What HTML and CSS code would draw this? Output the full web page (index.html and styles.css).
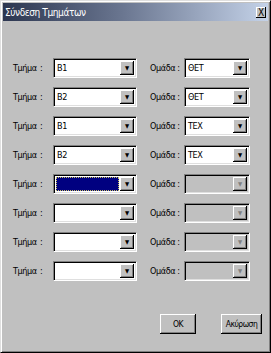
FILE: index.html
```html
<!DOCTYPE html>
<html lang="el">
<head>
    <meta charset="UTF-8">
    <title>Σύνδεση Τμημάτων</title>
    <link rel="stylesheet" href="styles.css">
</head>
<body>
    <div class="window">
        <div class="titlebar">
            <span class="title">Σύνδεση Τμημάτων</span>
            <span class="close">X</span>
        </div>

        <div class="rows">
            <div class="row">
                <span class="label">Τμήμα</span><span class="colon">:</span>
                <div class="combo wide"><span class="value">B1</span><span class="arrow">&#9660;</span></div>
                <span class="label group">Ομάδα :</span>
                <div class="combo narrow"><span class="value">ΘΕΤ</span><span class="arrow">&#9660;</span></div>
            </div>
            <div class="row">
                <span class="label">Τμήμα</span><span class="colon">:</span>
                <div class="combo wide"><span class="value">B2</span><span class="arrow">&#9660;</span></div>
                <span class="label group">Ομάδα :</span>
                <div class="combo narrow"><span class="value">ΘΕΤ</span><span class="arrow">&#9660;</span></div>
            </div>
            <div class="row">
                <span class="label">Τμήμα</span><span class="colon">:</span>
                <div class="combo wide"><span class="value">B1</span><span class="arrow">&#9660;</span></div>
                <span class="label group">Ομάδα :</span>
                <div class="combo narrow"><span class="value">ΤΕΧ</span><span class="arrow">&#9660;</span></div>
            </div>
            <div class="row">
                <span class="label">Τμήμα</span><span class="colon">:</span>
                <div class="combo wide"><span class="value">B2</span><span class="arrow">&#9660;</span></div>
                <span class="label group">Ομάδα :</span>
                <div class="combo narrow"><span class="value">ΤΕΧ</span><span class="arrow">&#9660;</span></div>
            </div>
            <div class="row">
                <span class="label">Τμήμα</span><span class="colon">:</span>
                <div class="combo wide focused"><span class="value"><span class="selection"></span></span><span class="arrow">&#9660;</span></div>
                <span class="label group">Ομάδα :</span>
                <div class="combo narrow disabled"><span class="value"></span><span class="arrow">&#9660;</span></div>
            </div>
            <div class="row">
                <span class="label">Τμήμα</span><span class="colon">:</span>
                <div class="combo wide"><span class="value"></span><span class="arrow">&#9660;</span></div>
                <span class="label group">Ομάδα :</span>
                <div class="combo narrow disabled"><span class="value"></span><span class="arrow">&#9660;</span></div>
            </div>
            <div class="row">
                <span class="label">Τμήμα</span><span class="colon">:</span>
                <div class="combo wide"><span class="value"></span><span class="arrow">&#9660;</span></div>
                <span class="label group">Ομάδα :</span>
                <div class="combo narrow disabled"><span class="value"></span><span class="arrow">&#9660;</span></div>
            </div>
            <div class="row">
                <span class="label">Τμήμα</span><span class="colon">:</span>
                <div class="combo wide"><span class="value"></span><span class="arrow">&#9660;</span></div>
                <span class="label group">Ομάδα :</span>
                <div class="combo narrow disabled"><span class="value"></span><span class="arrow">&#9660;</span></div>
            </div>
        </div>

        <div class="buttons">
            <button class="btn ok">OK</button>
            <button class="btn">Ακύρωση</button>
        </div>
    </div>
</body>
</html>
```

FILE: styles.css
```css
body {
    margin: 0;
    background: #c0c0c0;
    font-family: "DejaVu Sans Condensed", "DejaVu Sans", sans-serif;
    font-stretch: condensed;
    font-size: 9px;
    letter-spacing: -0.4px;
}
.window {
    box-sizing: border-box;
    width: 271px;
    height: 353px;
    background: #c0c0c0;
    border-top: 1px solid #dfdfdf;
    border-left: 1px solid #dfdfdf;
    border-right: 1px solid #000;
    border-bottom: 1px solid #000;
    box-shadow: inset 1px 1px 0 #fff, inset -1px -1px 0 #808080;
    padding: 2px;
    display: flex;
    flex-direction: column;
}
.titlebar {
    height: 18px;
    background: linear-gradient(to right, #2c3650, #6a7690 45%, #c4d2e8);
    display: flex;
    align-items: center;
    justify-content: space-between;
    padding: 0 2px 0 2px;
}
.title {
    color: #fff;
    font-size: 10px;
}
.close {
    width: 10px;
    height: 11px;
    background: #c0c0c0;
    box-shadow: inset -1px -1px 0 #000, inset 1px 1px 0 #fff;
    font-size: 10px;
    line-height: 11px;
    text-align: center;
    color: #000;
}
.rows {
    display: flex;
    flex-direction: column;
    gap: 9px;
    margin-top: 37px;
}
.row {
    display: flex;
    align-items: center;
    height: 20px;
    white-space: nowrap;
}
.label {
    color: #000;
    margin-left: 10px;
    width: 27px;
}
.colon {
    width: 13px;
}
.label.group {
    margin-left: 13px;
    width: 34px;
}
.combo {
    box-sizing: border-box;
    height: 20px;
    display: flex;
    background: #fff;
    border-top: 1px solid #808080;
    border-left: 1px solid #808080;
    border-right: 1px solid #fff;
    border-bottom: 1px solid #fff;
    box-shadow: inset 1px 1px 0 #000, inset -1px -1px 0 #dfdfdf;
    padding: 2px;
}
.combo.wide {
    width: 84px;
}
.combo.narrow {
    width: 66px;
}
.value {
    flex: 1;
    display: flex;
    align-items: center;
    padding-left: 1px;
    color: #000;
}
.arrow {
    width: 14px;
    background: #c0c0c0;
    box-shadow: inset -1px -1px 0 #000, inset 1px 1px 0 #fff, inset -2px -2px 0 #808080;
    font-size: 6px;
    line-height: 14px;
    text-align: center;
    letter-spacing: 0;
    color: #000;
}
.focused .value {
    padding: 0;
    margin-right: 1px;
}
.selection {
    flex: 1;
    align-self: stretch;
    background: #000080;
    outline: 1px dotted #c8c060;
    outline-offset: -1px;
}
.disabled {
    background: #c0c0c0;
}
.disabled .arrow {
    color: #808080;
}
.buttons {
    display: flex;
    justify-content: flex-end;
    gap: 25px;
    margin-top: auto;
    margin-bottom: 16px;
    padding-right: 6px;
}
.btn {
    height: 20px;
    width: 41px;
    padding: 0;
    font-family: inherit;
    font-stretch: condensed;
    font-size: 8.5px;
    letter-spacing: -0.5px;
    background: #c0c0c0;
    color: #000;
    border: none;
    box-shadow: inset -1px -1px 0 #000, inset 1px 1px 0 #fff, inset -2px -2px 0 #808080;
}
.btn.ok {
    width: 36px;
}
```
